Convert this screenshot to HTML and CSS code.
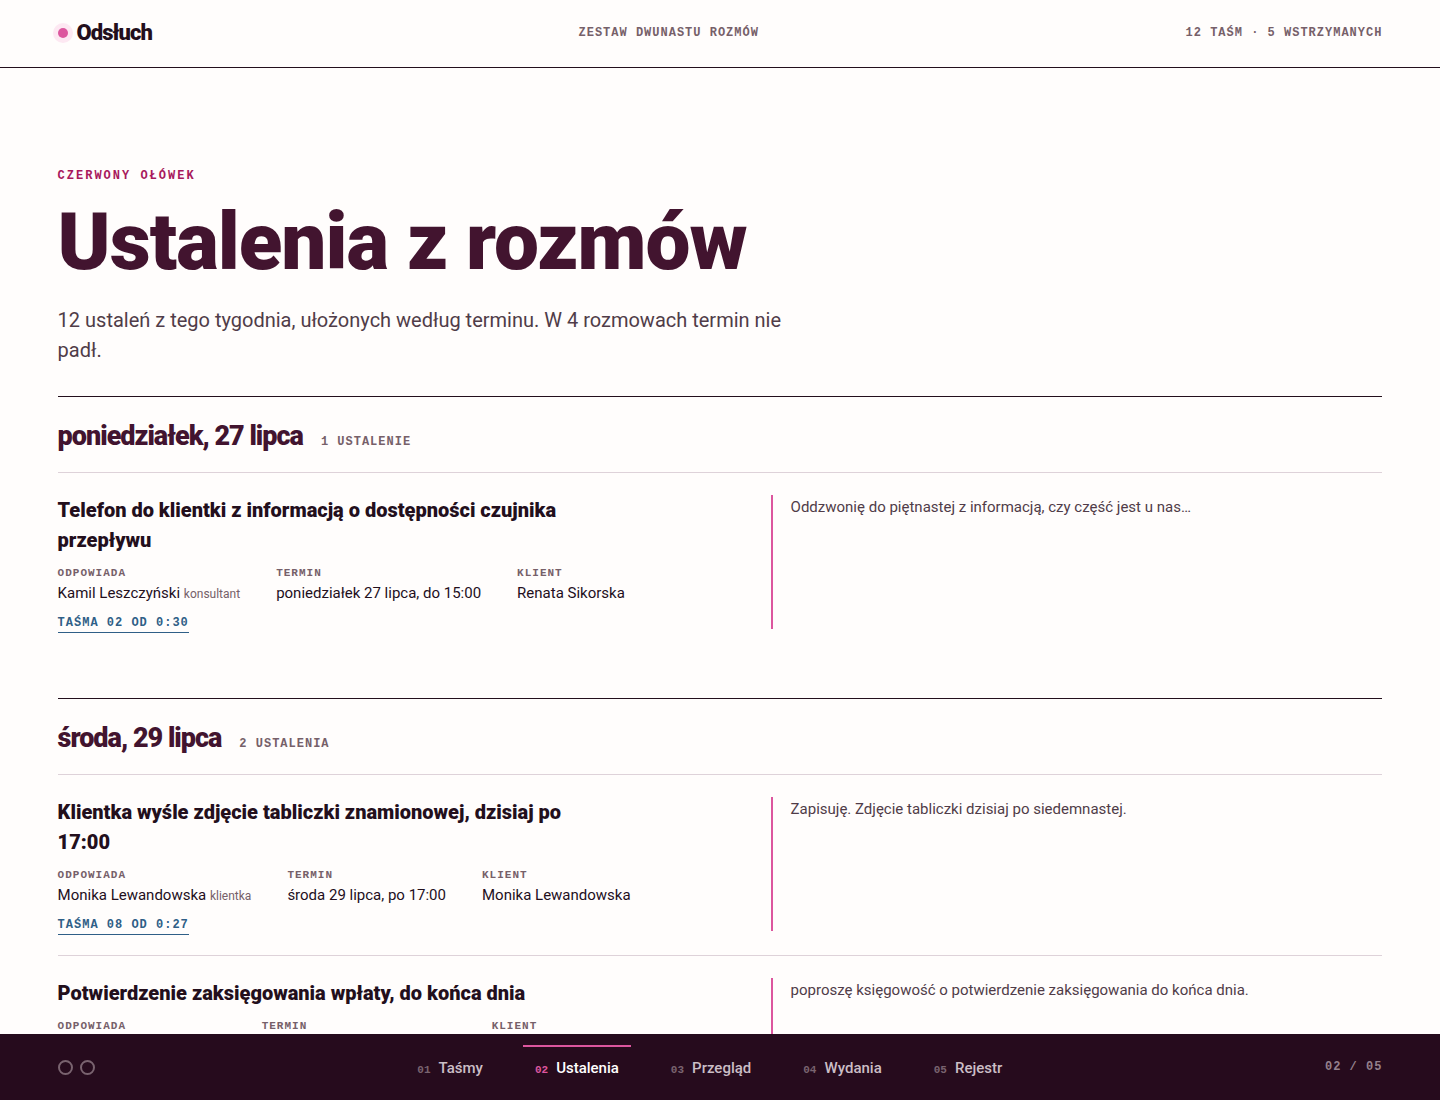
FILE: index.html
```html
<!DOCTYPE html>
<html lang="pl">
<head>
    <meta charset="utf-8">
    <meta name="viewport" content="width=device-width, initial-scale=1">
    <title>Odsłuch – Ustalenia z rozmów</title>
    <link rel="stylesheet" href="styles.css">
</head>
<body>
    <header class="topbar">
        <div class="brand"><span class="brand-dot"></span>Odsłuch</div>
        <div class="label">Zestaw dwunastu rozmów</div>
        <div class="label">12 taśm · 5 wstrzymanych</div>
    </header>

    <main>
        <div class="intro">
            <p class="eyebrow">Czerwony ołówek</p>
            <h1>Ustalenia z rozmów</h1>
            <p class="lead">12 ustaleń z tego tygodnia, ułożonych według terminu. W 4 rozmowach termin nie padł.</p>
        </div>

        <section class="day">
            <div class="day-head">
                <h2>poniedziałek, 27 lipca</h2>
                <span class="label">1 ustalenie</span>
            </div>
            <article class="item">
                <div>
                    <h3>Telefon do klientki z informacją o dostępności czujnika przepływu</h3>
                    <dl>
                        <div><dt>Odpowiada</dt><dd>Kamil Leszczyński <small>konsultant</small></dd></div>
                        <div><dt>Termin</dt><dd>poniedziałek 27 lipca, do 15:00</dd></div>
                        <div><dt>Klient</dt><dd>Renata Sikorska</dd></div>
                    </dl>
                    <a class="tape" href="#tasma-02">Taśma 02 od 0:30</a>
                </div>
                <blockquote>Oddzwonię do piętnastej z informacją, czy część jest u nas…</blockquote>
            </article>
        </section>

        <section class="day">
            <div class="day-head">
                <h2>środa, 29 lipca</h2>
                <span class="label">2 ustalenia</span>
            </div>
            <article class="item">
                <div>
                    <h3>Klientka wyśle zdjęcie tabliczki znamionowej, dzisiaj po 17:00</h3>
                    <dl>
                        <div><dt>Odpowiada</dt><dd>Monika Lewandowska <small>klientka</small></dd></div>
                        <div><dt>Termin</dt><dd>środa 29 lipca, po 17:00</dd></div>
                        <div><dt>Klient</dt><dd>Monika Lewandowska</dd></div>
                    </dl>
                    <a class="tape" href="#tasma-08">Taśma 08 od 0:27</a>
                </div>
                <blockquote>Zapisuję. Zdjęcie tabliczki dzisiaj po siedemnastej.</blockquote>
            </article>
            <article class="item">
                <div>
                    <h3>Potwierdzenie zaksięgowania wpłaty, do końca dnia</h3>
                    <dl>
                        <div><dt>Odpowiada</dt><dd>Zofia Leszczyńska <small>klientka</small></dd></div>
                        <div><dt>Termin</dt><dd>środa 29 lipca, do końca dnia</dd></div>
                        <div><dt>Klient</dt><dd>Piotr Nowak</dd></div>
                    </dl>
                    <a class="tape" href="#tasma-09">Taśma 09 od 0:41</a>
                </div>
                <blockquote>poproszę księgowość o potwierdzenie zaksięgowania do końca dnia.</blockquote>
            </article>
        </section>
    </main>

    <footer class="deck">
        <div class="reels"><span></span><span></span></div>
        <nav>
            <a href="#tasmy"><span>01</span>Taśmy</a>
            <a href="#ustalenia" class="active" aria-current="page"><span>02</span>Ustalenia</a>
            <a href="#przeglad"><span>03</span>Przegląd</a>
            <a href="#wydania"><span>04</span>Wydania</a>
            <a href="#rejestr"><span>05</span>Rejestr</a>
        </nav>
        <div class="label">02 / 05</div>
    </footer>
</body>
</html>
```
FILE: styles.css
```css
:root {
    --paper: #fffdfc;
    --ink: #230f1c;
    --plum: #42142f;
    --soft: #503c48;
    --mute: #766069;
    --line: #ded2d9;
    --pink: #dc569e;
    --mono: "Liberation Mono", monospace;
}
* {
    box-sizing: border-box;
    margin: 0;
    padding: 0;
}
body {
    display: flex;
    flex-direction: column;
    height: 100vh;
    background-color: var(--paper);
    color: var(--ink);
    font-family: Roboto, sans-serif;
    font-size: 15px;
    line-height: 24px;
}
.label {
    font: bold 12px/18px var(--mono);
    letter-spacing: 1px;
    text-transform: uppercase;
    color: var(--mute);
}
.topbar {
    display: flex;
    flex: none;
    justify-content: space-between;
    align-items: center;
    padding: 18px 4vw 19px;
    border-bottom: 1px solid var(--ink);
}
.brand {
    display: flex;
    align-items: center;
    gap: 9px;
    font-size: 22px;
    font-weight: 900;
    line-height: 30px;
    letter-spacing: -1px;
}
.brand-dot {
    width: 10px;
    height: 10px;
    border-radius: 50%;
    background-color: var(--pink);
    box-shadow: 0 0 0 5px #fde8f2;
}
main {
    flex: 1;
    min-height: 0;
    overflow-y: auto;
    scrollbar-width: none;
    padding: 99px 4vw 60px;
}
.intro {
    margin-bottom: 31px;
}
.eyebrow {
    font: bold 12px/18px var(--mono);
    letter-spacing: 2px;
    text-transform: uppercase;
    color: #a8195c;
}
h1 {
    margin: 16px 0 22px;
    font-size: 80px;
    font-weight: 900;
    line-height: 82px;
    letter-spacing: -1px;
    color: var(--plum);
}
.lead {
    max-width: 740px;
    font-size: 20px;
    line-height: 30px;
    color: var(--soft);
}
.day {
    margin-bottom: 45px;
    border-top: 1px solid var(--ink);
}
.day-head {
    display: flex;
    align-items: baseline;
    gap: 18px;
    padding: 22px 0 19px;
}
h2 {
    font-size: 27px;
    font-weight: 900;
    line-height: 34px;
    letter-spacing: -1px;
    color: var(--plum);
}
.item {
    display: grid;
    grid-template-columns: 11fr 10fr;
    gap: 40px;
    padding: 22px 0 24px;
    border-top: 1px solid var(--line);
}
h3 {
    max-width: 540px;
    font-size: 20px;
    font-weight: 900;
    line-height: 30px;
}
dl {
    display: flex;
    flex-wrap: wrap;
    gap: 36px;
    margin: 10px 0 9px;
}
dt {
    font: bold 11px/17px var(--mono);
    letter-spacing: 1px;
    text-transform: uppercase;
    color: var(--mute);
}
dd {
    line-height: 22px;
}
dd small {
    font-size: 12px;
    color: var(--mute);
}
.tape {
    display: block;
    width: fit-content;
    margin-bottom: -4px;
    border-bottom: 1px solid;
    font: bold 12px/18px var(--mono);
    letter-spacing: 1px;
    text-transform: uppercase;
    text-decoration: none;
    color: #2f5f87;
}
blockquote {
    padding-left: 18px;
    border-left: 2px solid var(--pink);
    color: var(--soft);
}
.deck {
    display: flex;
    flex: none;
    justify-content: space-between;
    align-items: center;
    padding: 11px 4vw;
    background-color: #260b1d;
}
.reels {
    display: flex;
    gap: 7px;
}
.reels span {
    width: 15px;
    height: 15px;
    border: 2px solid #79636f;
    border-radius: 50%;
}
nav {
    display: flex;
    gap: 28px;
}
nav a {
    display: flex;
    align-items: baseline;
    gap: 8px;
    padding: 9px 12px;
    border-top: 2px solid transparent;
    font-weight: 500;
    text-decoration: none;
    color: #cbbec6;
}
nav a span {
    font: bold 11px/16px var(--mono);
    color: #79636f;
}
nav .active {
    border-top-color: var(--pink);
    color: #fff;
}
nav .active span {
    color: var(--pink);
}
.deck .label {
    color: #94808c;
}
```
